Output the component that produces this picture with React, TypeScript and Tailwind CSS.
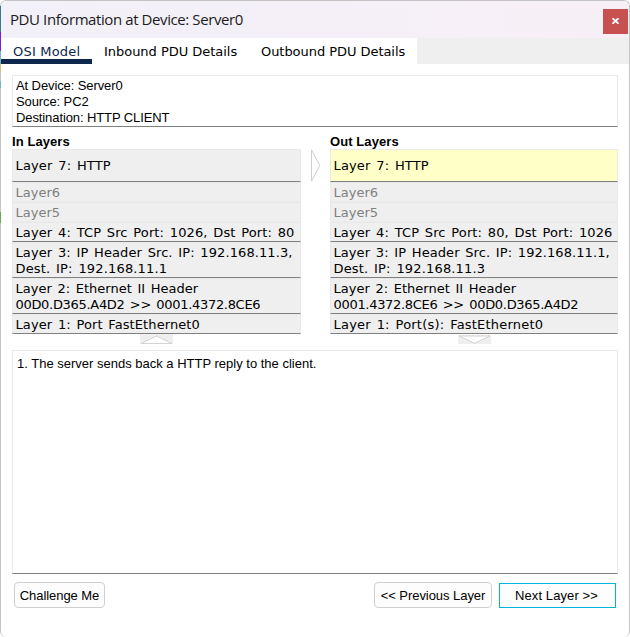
import React from "react";

type Line = { text: string; track: string };
type Row = { lines: Line[]; kind: "tall" | "idle" | "single" | "double"; active?: boolean };

const inRows: Row[] = [
  { lines: [{ text: "Layer 7: HTTP", track: "tracking-[0.14px]" }], kind: "tall" },
  { lines: [{ text: "Layer6", track: "tracking-normal" }], kind: "idle" },
  { lines: [{ text: "Layer5", track: "tracking-normal" }], kind: "idle" },
  { lines: [{ text: "Layer 4: TCP Src Port: 1026, Dst Port: 80", track: "tracking-[0.11px]" }], kind: "single" },
  {
    lines: [
      { text: "Layer 3: IP Header Src. IP: 192.168.11.3,", track: "tracking-[0.09px]" },
      { text: "Dest. IP: 192.168.11.1", track: "tracking-[0.16px]" },
    ],
    kind: "double",
  },
  {
    lines: [
      { text: "Layer 2: Ethernet II Header", track: "tracking-[0.01px]" },
      { text: "00D0.D365.A4D2 >> 0001.4372.8CE6", track: "tracking-[-0.31px]" },
    ],
    kind: "double",
  },
  { lines: [{ text: "Layer 1: Port FastEthernet0", track: "tracking-[0.09px]" }], kind: "single" },
];

const outRows: Row[] = [
  { lines: [{ text: "Layer 7: HTTP", track: "tracking-[0.14px]" }], kind: "tall", active: true },
  { lines: [{ text: "Layer6", track: "tracking-normal" }], kind: "idle" },
  { lines: [{ text: "Layer5", track: "tracking-normal" }], kind: "idle" },
  { lines: [{ text: "Layer 4: TCP Src Port: 80, Dst Port: 1026", track: "tracking-[0.11px]" }], kind: "single" },
  {
    lines: [
      { text: "Layer 3: IP Header Src. IP: 192.168.11.1,", track: "tracking-[0.07px]" },
      { text: "Dest. IP: 192.168.11.3", track: "tracking-[0.16px]" },
    ],
    kind: "double",
  },
  {
    lines: [
      { text: "Layer 2: Ethernet II Header", track: "tracking-[0.01px]" },
      { text: "0001.4372.8CE6 >> 00D0.D365.A4D2", track: "tracking-[-0.31px]" },
    ],
    kind: "double",
  },
  { lines: [{ text: "Layer 1: Port(s): FastEthernet0", track: "tracking-[0.21px]" }], kind: "single" },
];

const verdana = "font-['DejaVu_Sans',sans-serif] text-[13px]";

const rowStyle = {
  tall: "h-[33px] border-b-[#808080] pt-[8px]",
  idle: "h-[20px] border-b-[#ececec] pt-[2px] text-[#808080]",
  single: "h-[20px] border-b-[#808080] pt-[2px]",
  double: "h-[36px] border-b-[#808080] pt-[2px]",
};

function LayerRow({ row }: { row: Row }) {
  return (
    <div
      className={`border border-[#e9e9e9] pl-[2.5px] leading-4 whitespace-nowrap [word-spacing:1.5px] ${verdana} ${rowStyle[row.kind]} ${
        row.active ? "bg-[#ffffc8]" : "bg-[#efefef]"
      }`}
    >
      {row.lines.map((line) => (
        <div key={line.text} className={line.track}>
          {line.text}
        </div>
      ))}
    </div>
  );
}

function Column({ title, rows, up, width }: { title: string; rows: Row[]; up: boolean; width: string }) {
  return (
    <div className={`flex shrink-0 flex-col ${width}`}>
      <div className="h-[16px] text-[13px] leading-[17px] font-bold tracking-[0.08px]">{title}</div>
      {rows.map((row) => (
        <LayerRow key={row.lines[0].text} row={row} />
      ))}
      <svg className="ml-[128px] block" width="33" height="10" viewBox="0 0 33 10">
        <rect y={up ? 0 : 1} width="33" height={up ? 10 : 9} fill="#efefef" />
        {up ? (
          <path d="M1 9.5 L16.5 2 L32 9.5 Z" fill="#fff" stroke="#d3d3d3" />
        ) : (
          <path d="M1 2 L16.5 9.3 L32 2 Z" fill="#fff" stroke="#d3d3d3" />
        )}
      </svg>
    </div>
  );
}

export default function App() {
  return (
    <div className="relative h-[637px] w-[630px] overflow-hidden bg-white font-['Liberation_Sans',Arial,sans-serif] text-black">
      <div className="flex h-[637px] flex-col overflow-hidden rounded-[6px] border border-b-0 border-[#c4c4c4]">
        <header className="flex h-[37px] shrink-0 items-center justify-between bg-gradient-to-r from-[#f2f0f8] to-[#f7eff6] pr-px pl-[9px]">
          <h1 className="pb-[2px] font-['Open_Sans',sans-serif] text-[15px] leading-5 tracking-[-0.41px] text-[#1b1b1b]">
            PDU Information at Device: Server0
          </h1>
          <button className="mt-[3px] flex h-[25px] w-[25px] items-center justify-center bg-[#c75050]">
            <svg width="7" height="6" viewBox="0 0 7 6" fill="none" stroke="#fff" strokeWidth="1.7">
              <path d="M0.5 0.2 L6.5 5.8 M6.5 0.2 L0.5 5.8" />
            </svg>
          </button>
        </header>

        <nav className={`flex h-[26px] shrink-0 bg-[#efefef] leading-[27px] whitespace-nowrap ${verdana}`}>
          <div className="h-[26px] w-[91px] border-b-[5px] border-[#0d274d] bg-white pl-[12px] tracking-[0.2px] text-[#0d274d]">
            OSI Model
          </div>
          <div className="w-[157px] bg-white pl-[12px] tracking-[-0.03px]">Inbound PDU Details</div>
          <div className="w-[168px] bg-white pl-[12px] tracking-[-0.05px]">Outbound PDU Details</div>
        </nav>

        <main className="flex flex-col px-[11px] pt-[11px]">
          <section className="h-[52px] border border-[#e9e9e9] border-b-[#808080] pt-[2px] pl-[3px] text-[13px] leading-4 tracking-[-0.1px]">
            <div>At Device: Server0</div>
            <div>Source: PC2</div>
            <div>Destination: HTTP CLIENT</div>
          </section>

          <div className="mt-[6px] flex w-[606px]">
            <Column title="In Layers" rows={inRows} up={true} width="w-[289px]" />
            <div className="flex w-[29px] shrink-0 pt-[16px] pl-[10px]">
              <svg width="10" height="33" viewBox="0 0 10 33">
                <path d="M0.5 0.8 L8.8 16.5 L0.5 32.2 Z" fill="#fff" stroke="#d0d0d0" />
              </svg>
            </div>
            <Column title="Out Layers" rows={outRows} up={false} width="w-[288px]" />
          </div>

          <section className="mt-[6px] h-[224px] border border-[#e9e9e9] border-b-[#808080] pt-[5px] pl-[4px] text-[13px] leading-4">
            1. The server sends back a HTTP reply to the client.
          </section>

          <footer className="mt-[8px] flex text-[13px] whitespace-nowrap">
            <button className="ml-[2px] h-[26px] w-[91px] rounded-[4px] border border-[#d0d0d0] bg-[#fdfdfd] pt-[2px] tracking-[-0.06px]">
              Challenge Me
            </button>
            <button className="ml-[269px] h-[26px] w-[118px] rounded-[4px] border border-[#d0d0d0] bg-[#fdfdfd] pt-[2px] tracking-[-0.05px]">
              &lt;&lt; Previous Layer
            </button>
            <button className="mt-px ml-[7px] h-[25px] w-[117px] border border-[#00b4dc] bg-[#fdfdfd] pr-[2px] tracking-[0.1px]">
              Next Layer &gt;&gt;
            </button>
          </footer>
        </main>
      </div>

      <div className="absolute top-[6px] left-0 flex w-px flex-col">
        <div className="h-[26px] bg-[#39798a]" />
        <div className="h-[19px] bg-[#7a1fd0]" />
        <div className="h-[13px] bg-[#6fb9c5]" />
        <div className="h-[8px] bg-[#d8c087]" />
        <div className="h-[9px] bg-[#c4c4c4]" />
        <div className="h-[7px] bg-[#6fb9c5]" />
      </div>
      <div className="absolute top-[212px] left-0 h-[11px] w-px bg-[#6faa50]" />
    </div>
  );
}
